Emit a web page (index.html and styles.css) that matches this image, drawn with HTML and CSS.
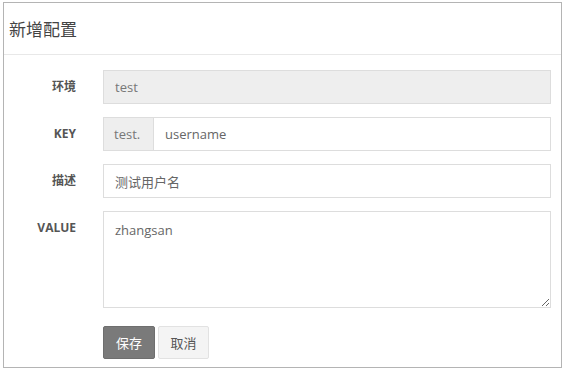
FILE: index.html
```
<!doctype html>
<html lang="zh-CN">
  <head>
    <meta charset="UTF-8" />
    <meta name="viewport" content="width=device-width, initial-scale=1.0" />
    <title>新增配置</title>
    <link rel="stylesheet" href="styles.css">
  </head>
  <body>
    <main class="page">
      <section class="panel">
        <header class="panel-header">
          <h1 class="panel-title">新增配置</h1>
        </header>
        <form class="config-form">
          <div class="form-row">
            <label class="form-label">环境</label>
            <input class="form-input" type="text" value="test" disabled />
          </div>
          <div class="form-row">
            <label class="form-label">KEY</label>
            <div class="input-group">
              <span class="input-addon">test.</span>
              <input class="form-input" type="text" value="username" />
            </div>
          </div>
          <div class="form-row">
            <label class="form-label">描述</label>
            <input class="form-input" type="text" value="测试用户名" />
          </div>
          <div class="form-row">
            <label class="form-label">VALUE</label>
            <textarea class="form-input form-textarea">zhangsan</textarea>
          </div>
          <div class="form-actions">
            <button type="submit" class="btn btn-save">保存</button>
            <button type="button" class="btn btn-cancel">取消</button>
          </div>
        </form>
      </section>
    </main>
  </body>
</html>
```

FILE: styles.css
```
* {
  margin: 0;
  padding: 0;
  box-sizing: border-box;
}

html,
body {
  height: 100%;
  background: #fff;
  overflow: hidden;
}

body {
  font-family: "Open Sans", "Noto Sans CJK SC", sans-serif;
  font-size: 13px;
  color: #555;
}

.page {
  padding: 2px 4px 3px 3px;
}

.panel {
  width: 559px;
  height: 366px;
  border: 1px solid #b4b4b4;
  background: #fff;
}

.panel-header {
  height: 52px;
  border-bottom: 1px solid #e8e8e8;
  display: flex;
  align-items: center;
  padding-left: 5px;
}

.panel-title {
  font-size: 17px;
  font-weight: 400;
  color: #444;
}

.config-form {
  padding: 15px 10px 0 0;
  display: flex;
  flex-direction: column;
  gap: 13px;
}

.form-row {
  display: flex;
  align-items: flex-start;
}

.form-label {
  width: 72px;
  flex-shrink: 0;
  text-align: right;
  font-weight: 700;
  font-size: 12px;
  color: #555;
  line-height: 34px;
  margin-right: 27px;
}

.form-input {
  flex: 1;
  height: 34px;
  padding: 0 11px;
  border: 1px solid #ddd;
  font-family: "Open Sans", "Noto Sans CJK SC", sans-serif;
  font-size: 13px;
  color: #666;
  background: #fff;
  outline: none;
}

.form-input:disabled {
  background: #eee;
  color: #777;
}

.input-group {
  flex: 1;
  display: flex;
}

.input-addon {
  width: 50px;
  height: 34px;
  line-height: 32px;
  padding-left: 10px;
  border: 1px solid #ddd;
  border-right: none;
  background: #eee;
  color: #777;
}

.form-textarea {
  height: 97px;
  padding: 9px 11px;
  line-height: 18px;
  resize: vertical;
}

.form-actions {
  display: flex;
  gap: 3px;
  padding-left: 99px;
  margin-top: 5px;
}

.btn {
  height: 33px;
  padding: 0 11px;
  border-radius: 2px;
  font-family: "Open Sans", "Noto Sans CJK SC", sans-serif;
  font-size: 13px;
  cursor: pointer;
}

.btn-save {
  width: 52px;
  background: #7a7a7a;
  border: 1px solid #6e6e6e;
  color: #fff;
}

.btn-cancel {
  width: 51px;
  background: #f4f4f4;
  border: 1px solid #e2e2e2;
  color: #555;
}
```
